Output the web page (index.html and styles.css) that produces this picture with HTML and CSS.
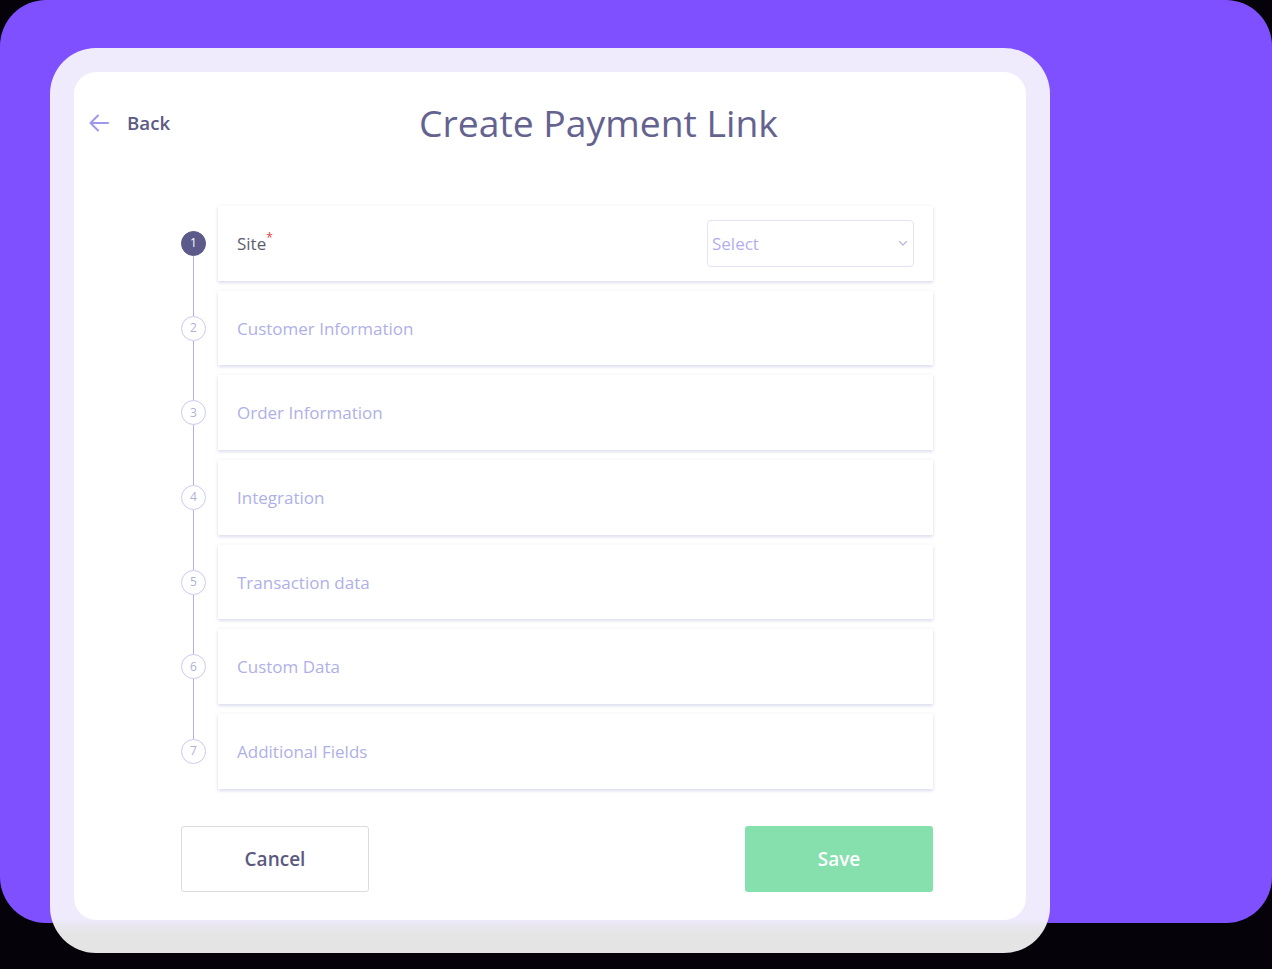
FILE: index.html
```html
<!DOCTYPE html>
<html lang="en">
<head>
<meta charset="utf-8">
<title>Create Payment Link</title>
<link rel="stylesheet" href="styles.css">
</head>
<body>
<div class="stage">
  <div class="backdrop"></div>
  <div class="device">
    <main class="screen">
      <header class="page-head">
        <a class="back" href="#">
          <svg class="back-icon" viewBox="0 0 24 24" width="24" height="24" aria-hidden="true">
            <path d="M21 12H4M11 4.5L3.5 12 11 19.5" fill="none" stroke="currentColor" stroke-width="2" stroke-linecap="round" stroke-linejoin="round"/>
          </svg>
          <span>Back</span>
        </a>
        <h1 class="page-title">Create Payment Link</h1>
      </header>

      <ol class="steps">
        <li class="step is-current">
          <div class="marker"><span class="rail"></span><span class="dot">1</span><span class="rail"></span></div>
          <div class="card">
            <span class="card-label label-active">Site<sup class="req">*</sup></span>
            <div class="select">
              <span>Select</span>
              <svg class="chev" viewBox="0 0 12 12" width="12" height="12" aria-hidden="true"><path d="M2.5 4.5L6 8l3.5-3.5" fill="none" stroke="currentColor" stroke-width="1.2" stroke-linecap="round" stroke-linejoin="round"/></svg>
            </div>
          </div>
        </li>
        <li class="step">
          <div class="marker"><span class="rail"></span><span class="dot">2</span><span class="rail"></span></div>
          <div class="card"><span class="card-label">Customer Information</span></div>
        </li>
        <li class="step">
          <div class="marker"><span class="rail"></span><span class="dot">3</span><span class="rail"></span></div>
          <div class="card"><span class="card-label">Order Information</span></div>
        </li>
        <li class="step">
          <div class="marker"><span class="rail"></span><span class="dot">4</span><span class="rail"></span></div>
          <div class="card"><span class="card-label">Integration</span></div>
        </li>
        <li class="step">
          <div class="marker"><span class="rail"></span><span class="dot">5</span><span class="rail"></span></div>
          <div class="card"><span class="card-label">Transaction data</span></div>
        </li>
        <li class="step">
          <div class="marker"><span class="rail"></span><span class="dot">6</span><span class="rail"></span></div>
          <div class="card"><span class="card-label">Custom Data</span></div>
        </li>
        <li class="step">
          <div class="marker"><span class="rail"></span><span class="dot">7</span><span class="rail"></span></div>
          <div class="card"><span class="card-label">Additional Fields</span></div>
        </li>
      </ol>

      <div class="actions">
        <button class="btn btn-cancel" type="button">Cancel</button>
        <button class="btn btn-save" type="button">Save</button>
      </div>
    </main>
  </div>
</div>
</body>
</html>
```

FILE: styles.css
```css
* { box-sizing: border-box; }

html, body {
  margin: 0;
  padding: 0;
}

body {
  width: 1272px;
  height: 969px;
  overflow: hidden;
  background: #050209;
  font-family: "Open Sans", "Noto Sans", sans-serif;
}

/* purple panel and the device share one grid cell */
.stage {
  display: grid;
  width: 1272px;
  height: 969px;
}

.backdrop,
.device {
  grid-area: 1 / 1;
}

.backdrop {
  width: 1272px;
  height: 923px;
  background: #7f50ff;
  border-radius: 46px;
}

.device {
  margin: 48px 0 0 50px;
  width: 1000px;
  height: 905px;
  padding: 24px;
  border-radius: 46px;
  background: linear-gradient(to bottom, #efebfd 0, #efebfd 872px, #e9e7ef 877px, #e5e5e6 885px, #e4e4e4 100%);
}

.screen {
  width: 952px;
  height: 848px;
  background: #fff;
  border-radius: 22px;
  padding: 25px 93px 0 0;
}

/* header */
.page-head {
  display: flex;
  align-items: center;
  height: 52px;
  padding-left: 13px;
}

.back {
  display: flex;
  align-items: center;
  gap: 16px;
  width: 83px;
  color: #5b5a86;
  text-decoration: none;
  font-size: 18.7px;
  font-weight: 600;
  line-height: 24px;
}

.back-icon {
  color: #9c99ea;
  flex: none;
}

.page-title {
  margin: 0 0 0 249px;
  font-size: 37.3px;
  font-weight: 400;
  color: #64628f;
  line-height: 52px;
}

/* stepper */
.steps {
  list-style: none;
  margin: 52px 0 0;
  padding: 0 0 0 107px;
}

.step {
  display: flex;
  height: 84.7px;
}

.marker {
  width: 25px;
  flex: none;
  display: flex;
  flex-direction: column;
  align-items: center;
  margin-right: 12px;
}

.rail {
  flex: 1;
  width: 1px;
  background: #aeb0ea;
}

.step:first-child .rail:first-child,
.step:last-child .rail:last-child {
  background: transparent;
}

.dot {
  width: 25px;
  height: 25px;
  flex: none;
  border-radius: 50%;
  border: 1px solid #cbcaf1;
  background: #fff;
  color: #b0afd8;
  font-size: 12px;
  display: flex;
  align-items: center;
  justify-content: center;
  line-height: 1;
}

.is-current .dot {
  background: #5b5a8b;
  border-color: #5b5a8b;
  color: #fff;
}

.card {
  flex: 1;
  margin: 5px 0;
  background: #fff;
  display: flex;
  align-items: center;
  justify-content: space-between;
  padding: 0 19px;
  box-shadow: 0 2px 3px rgba(168, 172, 214, 0.35), 0 0 4px rgba(60, 60, 100, 0.05);
}

.card-label {
  font-size: 17px;
  color: #b0b0e8;
}

.label-active {
  color: #5e5d6c;
  font-size: 17px;
}

.req {
  color: #ea3b3b;
  font-size: 12px;
  vertical-align: top;
  position: relative;
  top: -3px;
}

.select {
  width: 207px;
  height: 47px;
  border: 1px solid #e4e3f5;
  border-radius: 4px;
  display: flex;
  align-items: center;
  justify-content: space-between;
  padding: 0 4px 0 4px;
  font-size: 17px;
  color: #b1afee;
}

.chev {
  color: #b7b6d6;
}

/* buttons */
.actions {
  display: flex;
  justify-content: space-between;
  padding-left: 107px;
  margin-top: 32px;
}

.btn {
  width: 188px;
  height: 66px;
  border-radius: 3px;
  font-family: inherit;
  font-size: 19px;
  font-weight: 600;
  cursor: pointer;
}

.btn-cancel {
  background: #fff;
  border: 1px solid #dcdce0;
  color: #5b5a7e;
}

.btn-save {
  background: #86e0ad;
  border: 0;
  color: #fff;
}
```
